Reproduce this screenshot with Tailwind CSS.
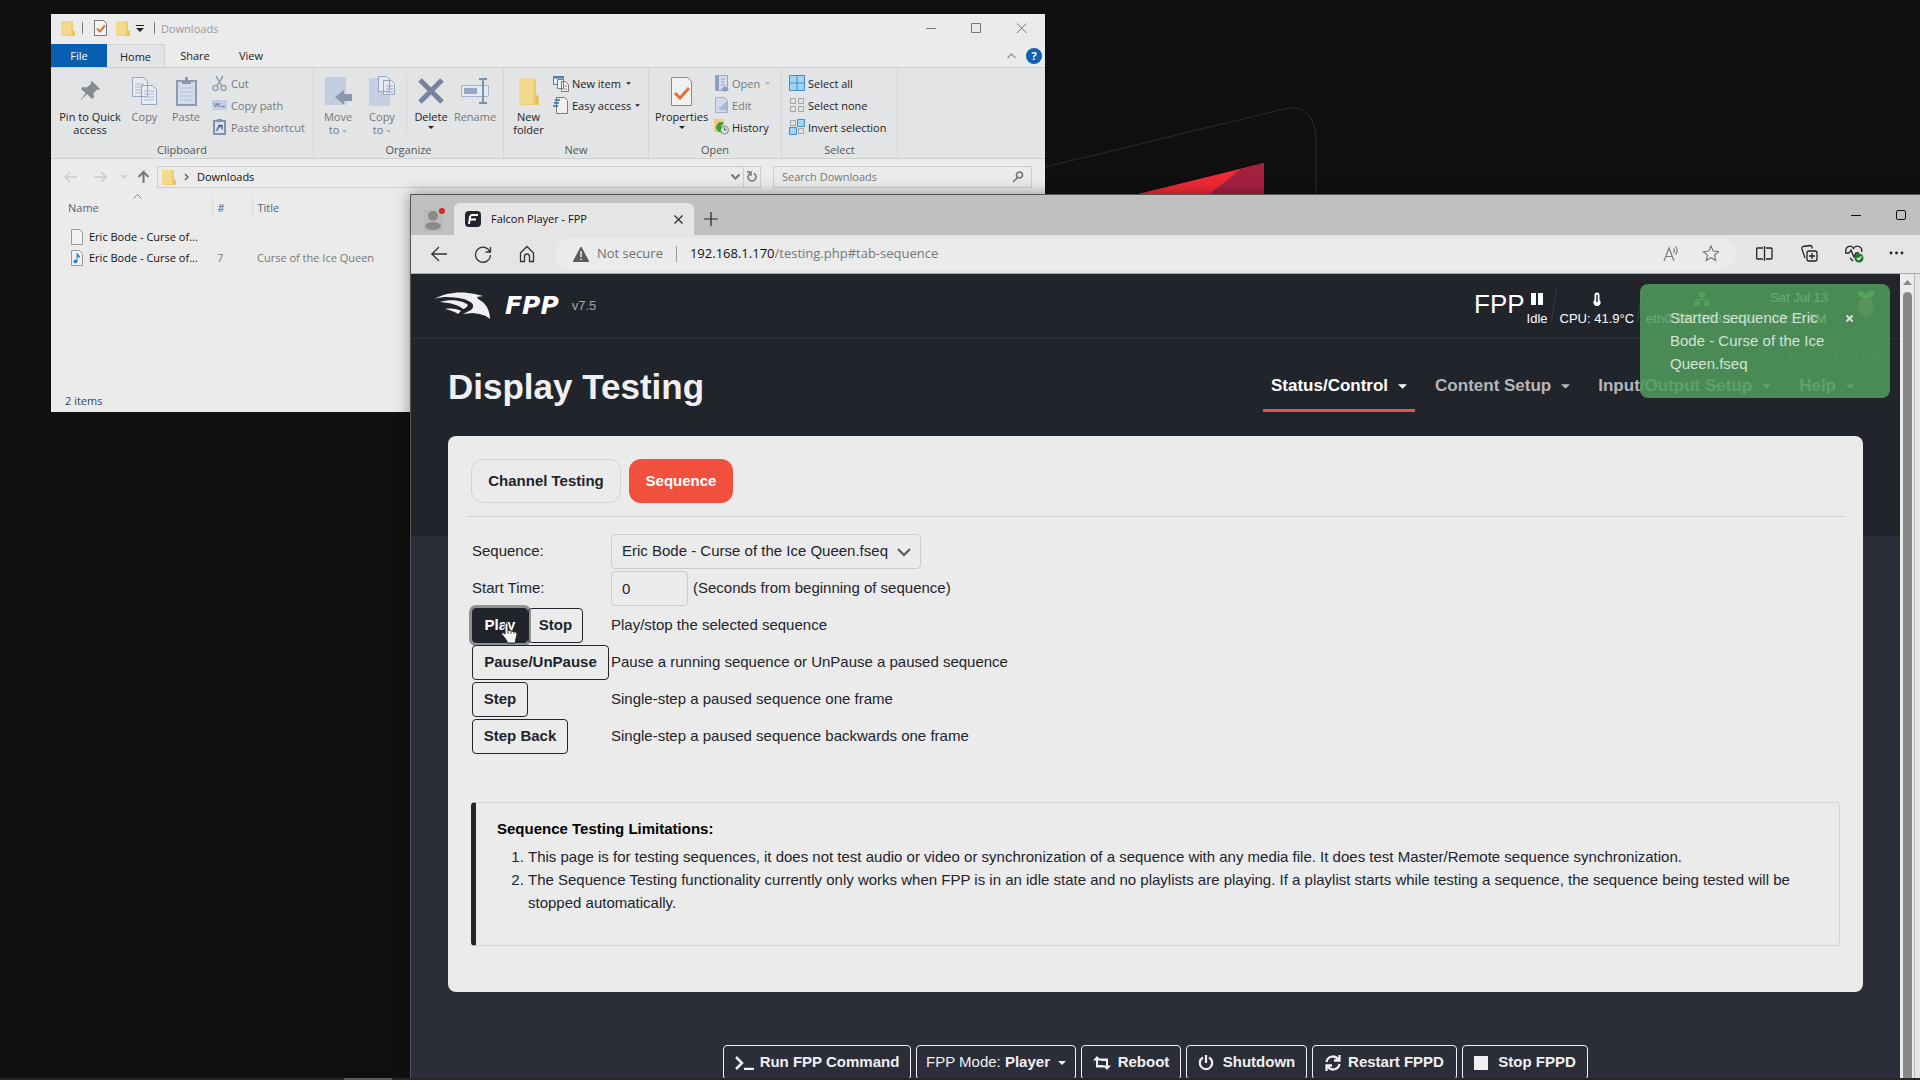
<!DOCTYPE html>
<html lang="en">
<head>
<meta charset="utf-8">
<title>Falcon Player - FPP</title>
<script src="https://cdn.jsdelivr.net/npm/@tailwindcss/browser@4"></script>
</head>
<body class="bg-[#101010]">
<svg class="hidden">
  <symbol id="folder" viewBox="0 0 14 16"><path d="M0 1h11l1 1v9l2 1v4H1L0 15z" fill="#eccb72"/><path d="M0 1h10v14l-9 .8L0 15z" fill="#f3d98c"/><path d="M11.500 10.500h2v5h-2z" fill="#e8bd58"/></symbol>
  <symbol id="caret" viewBox="0 0 8 4"><path d="M0 0h8L4 4z" fill="currentColor"/></symbol>
</svg>
<main class="relative min-h-screen overflow-hidden">

  <!-- Wallpaper -->
  <svg class="absolute left-[1040px] top-[100px]" width="290" height="100" viewBox="0 0 290 100" fill="none">
    <path d="M5 67 246 8.500Q274 4 276 38v60" stroke="#2c2c2c"/>
    <path d="M90 96 224 63v33z" fill="#ee2a35"/><path d="M201 69l23-6v33h-57z" fill="#a3203f"/>
  </svg>

  <!-- File manager -->
  <section class="absolute left-[51px] top-[14px] flex h-[398px] w-[994px] flex-col bg-[#ebebeb] font-['Open_Sans',sans-serif] text-[11px] leading-[13px] text-[#222]">
    <header class="flex h-[30px] items-center pb-[2px] pl-[10px] pr-[18px] text-[#999]">
      <svg width="14" height="16"><use href="#folder"/></svg>
      <span class="ml-[7px] h-3 w-px bg-[#777]"></span>
      <svg class="ml-[11px]" width="13" height="16" viewBox="0 0 13 16" fill="none"><path d="M.5.5h9l3 3v12H.5z" fill="#f4f4f4" stroke="#777"/><path d="m3 8.500 3 3 5-6" stroke="#d9743a" stroke-width="2"/></svg>
      <svg class="ml-[9px]" width="14" height="16"><use href="#folder"/></svg>
      <svg class="ml-[6px]" width="8" height="8" viewBox="0 0 8 8" fill="#222"><path d="M0 1h8v1H0zM0 4h8L4 8z"/></svg>
      <span class="ml-[10px] h-3 w-px bg-[#777]"></span>
      <span class="ml-[6px]">Downloads</span>
      <svg class="ml-auto" width="101" height="11" viewBox="0 0 101 11" fill="none" stroke="#777"><path d="M0 5.500h10M45.500.5h9v9h-9zM91 .5l9.500 9.500M100.500.5 91 10"/></svg>
    </header>
    <nav class="flex h-[23px] items-stretch">
      <button class="w-14 bg-[#0a60b0] text-white">File</button>
      <button class="w-[58px] border-r border-t border-[#cfd1d3] bg-[#e2e4e6]">Home</button>
      <button class="w-[60px]">Share</button>
      <button class="w-[52px]">View</button>
      <span class="ml-auto flex items-center gap-[10px] pr-[3px]">
        <svg width="9" height="6" viewBox="0 0 9 6" fill="none" stroke="#999" stroke-width="1.500"><path d="m.5 5 4-4 4 4"/></svg>
        <span class="flex size-4 items-center justify-center rounded-full bg-[#0f62ae] font-bold text-white">?</span>
      </span>
    </nav>
    <div class="flex h-[92px] border-b border-t border-[#cdcfd1] bg-[#e2e4e6]">
      <div class="flex w-[263px] flex-col border-r border-[#d3d5d7] pt-[4px]">
        <div class="flex h-[71px]">
          <button class="flex w-[78px] flex-col items-center"><span class="flex h-[38px] items-center"><svg width="22" height="22" viewBox="0 0 22 22" fill="#868b90"><path d="m13 1 8 8-2 1-1-.5-3.500 4 .5 4-2 1.500-5-5L1 21l5.500-8L2 9l1.500-2 4 .5L12 4l-.5-1.500z"/></svg></span><span>Pin to Quick<br>access</span></button>
          <button class="flex w-[31px] flex-col items-center text-[#777]"><span class="flex h-[38px] items-center"><svg width="25" height="28" viewBox="0 0 25 28" fill="#e7ebf2" stroke="#98a6bd"><path d="M.5.5h11l4 4v15H.5zM9.500 8.500h11l4 4v15h-15z"/><path d="M3 7h9M3 10h6M3 13h6M3 16h6M12 14h10M12 17h10M12 20h10M12 23h10" stroke="#a9b9d6"/></svg></span>Copy</button>
          <button class="flex w-[52px] flex-col items-center text-[#777]"><span class="flex h-[38px] items-center"><svg width="21" height="29" viewBox="0 0 21 29"><path d="M1 4h19v24H1z" fill="#d5ddec" stroke="#8c9ab3" stroke-width="2"/><path d="M6 3h3V0h3v3h3v4H6z" fill="#8b98ad"/><path d="M4 11h13M4 15h13M4 19h13M4 23h13" stroke="#b3c2dd"/></svg></span>Paste</button>
          <div class="flex flex-col text-[#777]">
            <button class="flex h-[22px] items-center gap-[4px]"><svg width="15" height="17" viewBox="0 0 15 17" fill="none" stroke="#98a2b0" stroke-width="1.500"><path d="M4 1l6 10M11 1 5 11"/><circle cx="3.500" cy="13" r="2.500"/><circle cx="11.500" cy="13" r="2.500"/></svg>Cut</button>
            <button class="flex h-[22px] items-center gap-[4px]"><svg width="15" height="10" viewBox="0 0 15 10"><path d="M0 0h15v10H0z" fill="#c0cde2"/><path d="m2 3 1.500 4L5 3l1.500 4L8 3M9 6.500h4" fill="none" stroke="#71819d"/></svg>Copy path</button>
            <button class="flex h-[22px] items-center gap-[4px]"><svg width="15" height="16" viewBox="0 0 15 16"><path d="M2 2h11v13H2z" fill="#dbe3f0" stroke="#8193b2" stroke-width="2"/><path d="M5 0h5v3H5z" fill="#8193b2"/><path d="M5 12c0-3 1-4 4-5M6 6.500h4v4" fill="none" stroke="#54698f" stroke-width="1.500"/></svg>Paste shortcut</button>
          </div>
        </div>
        <div class="text-center text-[#555]">Clipboard</div>
      </div>
      <div class="flex w-[190px] flex-col border-r border-[#d3d5d7] pt-[4px]">
        <div class="flex h-[71px]">
          <button class="flex w-[48px] flex-col items-center text-[#777]"><span class="flex h-[38px] items-center"><svg width="27" height="28" viewBox="0 0 27 28"><path d="M0 0h21v28H0z" fill="#c2cde0"/><path d="m10 20 9-7v4h8v7h-8v4z" fill="#8997ad"/></svg></span><span>Move<br>to <svg class="inline text-[#aaa]" width="5" height="3"><use href="#caret"/></svg></span></button>
          <button class="flex w-[40px] flex-col items-center text-[#777]"><span class="flex h-[38px] items-center"><svg width="27" height="30" viewBox="0 0 27 30"><path d="M0 2h21v28H0z" fill="#c5d0e2"/><path d="M9.500.5h8l3 3v12h-11zM14.500 4.500h8l3 3v11h-11z" fill="#e5eaf3" stroke="#97a6bf"/><path d="M17 10h7M17 13h7M17 16h7" stroke="#97a6bf"/></svg></span><span>Copy<br>to <svg class="inline text-[#aaa]" width="5" height="3"><use href="#caret"/></svg></span></button>
          <span class="ml-[4px] mt-1 h-14 w-px bg-[#d3d5d7]"></span>
          <button class="flex w-[48px] flex-col items-center"><span class="flex h-[38px] items-center"><svg width="26" height="26" viewBox="0 0 26 26" stroke="#75849c" stroke-width="5"><path d="m2 2 22 22M24 2 2 24"/></svg></span>Delete<svg class="mt-[3px]" width="6" height="3"><use href="#caret"/></svg></button>
          <button class="flex w-[40px] flex-col items-center text-[#777]"><span class="flex h-[38px] items-center"><svg width="28" height="26" viewBox="0 0 28 26" fill="none"><path d="M.5 7.500h27v11H.5z" fill="#e4eaf4" stroke="#a5b4cd"/><path d="M3 10h13v6H3z" fill="#94a6c4"/><path d="M18 1h8M22 1v24M18 25h8" stroke="#7f90ac" stroke-width="2"/></svg></span>Rename</button>
        </div>
        <div class="text-center text-[#555]">Organize</div>
      </div>
      <div class="flex w-[145px] flex-col border-r border-[#d3d5d7] pt-[4px]">
        <div class="flex h-[71px]">
          <button class="flex w-[49px] flex-col items-center"><span class="flex h-[38px] items-center"><svg width="20" height="28" viewBox="0 0 14 16" preserveAspectRatio="none"><use href="#folder"/></svg></span><span>New<br>folder</span></button>
          <div class="flex flex-col">
            <button class="flex h-[22px] items-center gap-[3px]"><svg width="16" height="17" viewBox="0 0 16 17"><path d="M.5 1.500h10v8H.5z" fill="#e3edf7" stroke="#4d7fae"/><path d="M.5 1.500h10v2H.5z" fill="#4d7fae"/><path d="M4.500 4.500h6v9h-6zM8.500 6.500h4l3 3v7h-7z" fill="#f0f0f0" stroke="#7b7b7b"/><path d="M10 11h4M10 14h4" stroke="#999"/></svg>New item<svg class="ml-[2px]" width="5" height="3"><use href="#caret"/></svg></button>
            <button class="flex h-[22px] items-center gap-[3px]"><svg width="16" height="17" viewBox="0 0 16 17"><path d="M3.500.5h8l3 3v13h-11z" fill="#f0f0f0" stroke="#7b7b7b"/><path d="M2 3h5M1 6h5M0 9h5" stroke="#2472b8" stroke-width="1.500"/></svg>Easy access<svg class="ml-[1px]" width="5" height="3"><use href="#caret"/></svg></button>
          </div>
        </div>
        <div class="text-center text-[#555]">New</div>
      </div>
      <div class="flex w-[133px] flex-col border-r border-[#d3d5d7] pt-[4px]">
        <div class="flex h-[71px]">
          <button class="flex w-[65px] flex-col items-center"><span class="flex h-[38px] items-center"><svg width="21" height="29" viewBox="0 0 21 29"><path d="M.5.5h16l4 4v24H.5z" fill="#f1f1f1" stroke="#8a8a8a"/><path d="m4 16 5 5 9-10" fill="none" stroke="#d9743a" stroke-width="3"/></svg></span>Properties<svg class="mt-[3px]" width="6" height="3"><use href="#caret"/></svg></button>
          <div class="flex flex-col">
            <button class="flex h-[22px] items-center gap-[3px] text-[#777]"><svg width="15" height="17" viewBox="0 0 15 17"><path d="M1.500.5h12v15h-12z" fill="#d5dcea" stroke="#98a4ba"/><path d="M2 1h3v14H2z" fill="#8e9fc0"/><path d="M7 4h4M7 7h4M7 10h4" stroke="#98a4ba"/><path d="m7 14 4-3 4 3-4 3z" fill="#8ea0c0"/></svg>Open<svg class="ml-[2px] text-[#aaa]" width="5" height="3"><use href="#caret"/></svg></button>
            <button class="flex h-[22px] items-center gap-[3px] text-[#777]"><svg width="15" height="16" viewBox="0 0 15 16"><path d="M1.500.5h9l3 3v12h-12z" fill="#d0daec" stroke="#a3b0c8"/><path d="M4 12 13 4v10z" fill="#a6b8da"/></svg>Edit</button>
            <button class="flex h-[22px] items-center gap-[3px]"><svg width="15" height="16" viewBox="0 0 15 16"><path d="M0 0h10v13H0z" fill="#eccf77"/><circle cx="10.500" cy="11" r="4" fill="#ddd" stroke="#888"/><path d="M10.500 8.500V11h2" fill="none" stroke="#555"/><path d="M2 8c1-5 5-6 8-4l-3 3 0 6c-2 1-5-2-5-5z" fill="#3f9a43"/></svg>History</button>
          </div>
        </div>
        <div class="text-center text-[#555]">Open</div>
      </div>
      <div class="flex w-[116px] flex-col border-r border-[#d3d5d7] pt-[4px]">
        <div class="flex h-[71px] flex-col pl-[7px]">
          <button class="flex h-[22px] items-center gap-[3px]"><svg width="16" height="16" viewBox="0 0 16 16" fill="#a5d3f5" stroke="#3d8ecb"><path d="M.5.5h15v15H.5zM8 0v16M0 8h16"/></svg>Select all</button>
          <button class="flex h-[22px] items-center gap-[3px]"><svg width="16" height="16" viewBox="0 0 16 16" fill="none" stroke="#a2a2a2"><path d="M1.500 1.500h5v5h-5zM9.500 1.500h5v5h-5zM1.500 9.500h5v5h-5zM9.500 9.500h5v5h-5z"/></svg>Select none</button>
          <button class="flex h-[22px] items-center gap-[3px]"><svg width="16" height="16" viewBox="0 0 16 16" fill="none" stroke="#a2a2a2"><path d="M1.500 1.500h5v5h-5zM9.500 9.500h5v5h-5z"/><path d="M8.500.5h7v7h-7zM.5 8.500h7v7h-7z" fill="#a5d3f5" stroke="#3d8ecb"/></svg>Invert selection</button>
        </div>
        <div class="text-center text-[#555]">Select</div>
      </div>
    </div>
    <div class="flex h-[35px] items-center pl-[13px] pr-[13px]">
      <svg width="86" height="14" viewBox="0 0 86 14" fill="none" stroke="#cbcbcb" stroke-width="1.500"><path d="M13 7H1l5-5M1 7l5 5M30 7h12l-5-5M42 7l-5 5M57 5l3 3 3-3"/><path d="M79.500 13V2l-5 5M79.500 2l5 5" stroke="#777" stroke-width="2"/></svg>
      <div class="ml-[7px] flex h-[22px] w-[604px] items-center border border-[#ccc] pl-[4px]">
        <svg width="14" height="16"><use href="#folder"/></svg>
        <svg class="ml-[8px]" width="5" height="8" viewBox="0 0 5 8" fill="none" stroke="#666" stroke-width="1.500"><path d="m1 1 3 3-3 3"/></svg>
        <span class="ml-[8px] text-[#111]">Downloads</span>
        <svg class="ml-auto mr-[3px]" width="9" height="6" viewBox="0 0 9 6" fill="none" stroke="#777" stroke-width="2"><path d="m.5.5 4 4 4-4"/></svg>
        <span class="flex h-full w-[17px] items-center justify-center border-l border-[#ccc]"><svg width="10" height="12" viewBox="0 0 10 12" fill="none" stroke="#777" stroke-width="1.500"><path d="M7 2.500A4 4 0 1 1 3 2.500M0 1h4v4"/></svg></span>
      </div>
      <label class="ml-[12px] flex h-[22px] flex-1 items-center border border-[#ccc] pl-[8px] pr-[7px]">
        <input type="search" aria-label="Search Downloads" placeholder="Search Downloads" class="min-w-0 flex-1 bg-transparent outline-none placeholder:text-[#777]">
        <svg width="12" height="12" viewBox="0 0 12 12" fill="none" stroke="#777" stroke-width="1.700"><circle cx="7.500" cy="4" r="3"/><path d="M5.500 6.500 1 11"/></svg>
      </label>
    </div>
    <table class="w-[360px] table-fixed text-left">
      <thead>
        <tr class="h-[24px] font-normal text-[#55617a]">
          <th class="relative w-[161px] border-r border-[#dcdcdc] pl-[17px] pt-[2px] font-normal">Name<svg class="absolute left-[82px] top-0" width="9" height="5" viewBox="0 0 9 5" fill="none" stroke="#888"><path d="m.5 4.500 4-4 4 4"/></svg></th>
          <th class="w-[40px] border-r border-[#dcdcdc] pl-[5px] pt-[2px] font-normal">#</th>
          <th class="pl-[5px] pt-[2px] font-normal">Title</th>
        </tr>
      </thead>
      <tbody class="text-[#777]">
        <tr class="h-[8px]"><td colspan="3"></td></tr>
        <tr class="h-[21px]"><td class="whitespace-nowrap pl-[20px] text-[#111]"><span class="flex items-center gap-[6px]"><svg width="12" height="16" viewBox="0 0 12 16"><path d="M.5.5h8l3 3v12H.5z" fill="#f1f1f1" stroke="#999"/></svg>Eric Bode - Curse of...</span></td><td></td><td></td></tr>
        <tr class="h-[21px]"><td class="whitespace-nowrap pl-[20px] text-[#111]"><span class="flex items-center gap-[6px]"><svg width="12" height="16" viewBox="0 0 12 16"><path d="M.5.5h8l3 3v12H.5z" fill="#f1f1f1" stroke="#999"/><path d="M5.500 3h1c0 2 3 2 2.500 5-.5-1-1.500-1-2.500-1v4c0 3-4 2.500-4 .5s2-2 3-1.500z" fill="#2180ca"/></svg>Eric Bode - Curse of...</span></td><td class="pl-[5px]">7</td><td class="whitespace-nowrap pl-[5px]">Curse of the Ice Queen</td></tr>
      </tbody>
    </table>
    <footer class="mt-auto pb-[5px] pl-[14px] text-[#3c4560]">2 items</footer>
  </section>

  <!-- Web browser -->
  <section class="absolute bottom-[2px] left-[410px] right-0 top-[194px] flex flex-col overflow-hidden border-l border-t border-[#555] bg-[#e5e5e5] font-['Open_Sans',sans-serif] shadow-[0_0_14px_rgba(0,0,0,0.4)]">
    <div class="flex h-[40px] shrink-0 items-end bg-[#c0c0c0] pr-[13px]">
      <button aria-label="Profile" class="flex h-full w-[43px] items-end justify-center pb-[4px] pl-[4px]"><svg width="22" height="24" viewBox="0 0 22 24"><path d="M0 3h18v21H0z" fill="#bab9b5"/><circle cx="9" cy="9" r="5" fill="#8c8c8a"/><ellipse cx="9" cy="19" rx="8" ry="4" fill="#8c8c8a"/><circle cx="18" cy="4" r="3" fill="#d02a25"/></svg></button>
      <div class="flex h-[32px] w-[240px] items-center rounded-t-md bg-[#e5e5e5] pl-[11px] pr-[11px] text-[11px]">
        <span class="flex size-4 items-center justify-center rounded bg-[#22242c]"><svg width="10" height="10" viewBox="0 0 10 10" fill="none" stroke="#fff" stroke-width="2"><path d="M10 1H4Q2.500 1 2 3L1 10M2 5.500h6"/></svg></span>
        <span class="ml-[10px] text-[#111]">Falcon Player - FPP</span>
        <button aria-label="Close tab" class="ml-auto"><svg width="9" height="9" viewBox="0 0 9 9" stroke="#333" stroke-width="1.300"><path d="m.5.5 8 8M8.500.5l-8 8"/></svg></button>
      </div>
      <button aria-label="New tab" class="ml-[10px] pb-[9px]"><svg width="14" height="14" viewBox="0 0 14 14" stroke="#222" stroke-width="1.200"><path d="M7 0v14M0 7h14"/></svg></button>
      <svg class="mb-[14px] ml-auto" width="57" height="11" viewBox="0 0 57 11" fill="none" stroke="#111"><path d="M1 5.500h10"/><rect x="46.500" y=".5" width="9" height="9" rx="1.500"/></svg>
    </div>
    <div class="flex h-[39px] shrink-0 items-center border-b border-[#a9adb3] pl-[20px] pr-[16px]">
      <svg width="104" height="18" viewBox="0 0 104 18" fill="none" stroke="#333" stroke-width="1.300"><path d="M16 9H1l7-7M1 9l7 7M59 7a7.500 7.500 0 1 0 .5 3M59.500 2v5h-5M89.500 8l6.500-6.500L102.500 8v8.500h-4v-5a2.500 2.500 0 0 0-5 0v5h-4z"/></svg>
      <div class="ml-[20px] flex h-[32px] flex-1 items-center rounded-full bg-[#ebebeb] pl-[18px] pr-[17px] text-[13px]">
        <svg width="16" height="15" viewBox="0 0 16 15"><path d="M8 0l8 15H0z" fill="#5c5c5c" stroke="#5c5c5c" stroke-linejoin="round"/><path d="M8 4v6M8 11.500v1.500" stroke="#eee" stroke-width="1.500"/></svg>
        <span class="ml-[8px] text-[#707070]">Not secure</span>
        <span class="ml-[13px] h-4 w-px bg-[#999]"></span>
        <span class="ml-[13px] text-[#777]"><span class="text-[#111]">192.168.1.170</span>/testing.php#tab-sequence</span>
        <svg class="ml-auto" width="56" height="18" viewBox="0 0 56 18" fill="none" stroke="#7c7c7c" stroke-width="1.200"><path d="m1 16 5-13 5 13M3 11.500h6M10.500 3.500q2 2 0 4.500M12.500 1.500q3.500 4 0 8"/><path d="m48 1 2.200 5 5.300.6-4 3.600 1.200 5.300L48 12.800l-4.700 2.700 1.200-5.300-4-3.600 5.300-.6z"/></svg>
      </div>
      <svg class="ml-[20px]" width="148" height="20" viewBox="0 0 148 20" fill="none" stroke="#222" stroke-width="1.300"><path d="M7 4H1.500q-.8 0-.8.8v9.400q0 .8.800.8H7M8.500 2v15M10 4h5q1 0 1 1v9q0 1-1 1h-5"/><rect x="51" y="7" width="10" height="10" rx="2"/><path d="M56 9v6M53 12h6M49 14l-3-9q-.5-2 1-2.500l7-1q2 0 2.500 3"/><path d="m97 17-3-3M90 8c-1.500-5 5-8 7.500-3.500C100 0 107 2.500 105.500 8M89 9h4l2-3 3 7 2-4h3"/><circle cx="103" cy="14" r="4.500" fill="#1f7a2d" stroke="none"/><path d="m101 14 1.500 1.500 3-3" stroke="#fff"/><g fill="#222" stroke="none"><circle cx="135" cy="9" r="1.400"/><circle cx="140.500" cy="9" r="1.400"/><circle cx="146" cy="9" r="1.400"/></g></svg>
    </div>

    <div class="flex min-h-0 flex-1">
      <div class="relative min-w-0 flex-1 overflow-hidden bg-[linear-gradient(#22242c_262px,#2b2d38_262px)] font-['Liberation_Sans',Arial,sans-serif] text-[15px] text-[#22242c]">
        <header class="flex h-[65px] items-center border-b border-[#30323b] pl-[23px] pr-[24px] text-white">
          <svg width="57" height="28" viewBox="0 0 57 28" fill="#f0f0f2"><path d="M0 7C12 0 28-1 41 2l8 2-6 1 1 2c6 3 12 9 12 20-4-4-10-5-17-6l-10 1 8-4c3-3 3-6-1-8C26 6 14 3 0 7z"/><path d="M16 6c9-1 18 1 22 6-1 3-2 5-5 6 2-3 2-5-1-7-4-3-9-4-16-5z" fill="#22242c"/><path d="M6 10c10-3 22-2 28 3-1 2-2 3-5 4-5-4-11-6-23-7z"/><path d="M11 17c7-1 13 0 16 2l-3 3c-3-2-7-4-13-5z"/></svg>
          <span class="ml-[14px] font-['DejaVu_Sans',sans-serif] text-[25px] font-bold italic">FPP</span>
          <span class="ml-[13px] text-[13px] text-[#a5a6aa]">v7.5</span>
          <div class="ml-auto flex h-[44px] items-start text-[13px] leading-[18px]">
            <span class="text-[26px] leading-[40px]">FPP</span>
            <div class="ml-[2px] flex h-full flex-col items-center justify-between"><svg class="mt-[9px]" width="12" height="12" viewBox="0 0 12 12" fill="#fff"><path d="M0 0h5v12H0zM7 0h5v12H7z"/></svg><span>Idle</span></div>
            <svg class="mx-[3px] mt-[5px]" width="6" height="32" viewBox="0 0 6 32" stroke="#3a3c45"><path d="M5.500 0 .5 32"/></svg>
            <div class="flex h-full flex-col items-center justify-between"><svg class="mt-[8px]" width="8" height="14" viewBox="0 0 8 14"><path d="M1.500 3a2.500 2.500 0 0 1 5 0v5a3.500 3.500 0 1 1-5 0z" fill="#fff"/><path d="M4 3v7" stroke="#22242c" stroke-width="1.500"/></svg><span>CPU: 41.9°C</span></div>
            <svg class="mx-[3px] mt-[5px]" width="6" height="32" viewBox="0 0 6 32" stroke="#3a3c45"><path d="M5.500 0 .5 32"/></svg>
            <div class="flex h-full flex-col items-center justify-between"><svg class="mt-[8px]" width="16" height="14" viewBox="0 0 16 14" fill="#3fc04e"><path d="M5 0h6v5H9v2h5v2h2v5h-6V9h2V8H4v1h2v5H0V9h2V7h5V5H5z"/></svg><span>eth0:192.168.1.170</span></div>
            <div class="ml-[12px] flex h-full flex-col items-center justify-between"><span class="mt-[5px]">Sat Jul 13</span><span>03:10 AM</span></div>
            <svg class="ml-[28px] mt-[7px]" width="20" height="26" viewBox="0 0 20 26"><path d="M1 0q7-1 9 4 2-5 9-4-1 6-6 7H7Q2 6 1 0z" fill="#5fd042"/><path d="M10 7q8 0 8 9-3 9-8 10-5-1-8-10 0-9 8-9z" fill="#8c5f58"/><circle cx="10" cy="15" r="3" fill="#327b40"/></svg>
          </div>
        </header>
        <p class="pr-[13px] pt-[8px] text-right text-[13px] leading-[20px] text-[#4c4e57]">Press F1 for help</p>
        <div class="flex h-[45px] items-start pl-[37px] pr-[37px]">
          <h1 class="whitespace-nowrap text-[35px] font-bold leading-[40px] text-[#f0f0f2]">Display Testing</h1>
          <nav class="ml-auto flex h-full gap-[12px] whitespace-nowrap text-[17px] font-bold text-[#b5b6ba]">
            <a href="#status" class="flex items-start gap-[10px] border-b-[3px] border-[#e0564f] px-[8px] pt-[9px] leading-[20px] text-white">Status/Control<svg class="mt-[8px]" width="9" height="5"><use href="#caret"/></svg></a>
            <a href="#content" class="flex items-start gap-[10px] px-[8px] pt-[9px] leading-[20px]">Content Setup<svg class="mt-[8px]" width="9" height="5"><use href="#caret"/></svg></a>
            <a href="#io" class="flex items-start gap-[10px] px-[8px] pt-[9px] leading-[20px]">Input/Output Setup<svg class="mt-[8px]" width="9" height="5"><use href="#caret"/></svg></a>
            <a href="#help" class="flex items-start gap-[10px] px-[8px] pt-[9px] leading-[20px]">Help<svg class="mt-[8px]" width="9" height="5"><use href="#caret"/></svg></a>
          </nav>
        </div>

        <div class="mx-[37px] mt-6 rounded-lg bg-[#ebebeb] px-[23px] pb-[46px] pt-[23px]">
          <div class="flex h-11 gap-[8px] font-bold">
            <button class="w-[150px] rounded-xl border border-[#d3d3d3]">Channel Testing</button>
            <button class="w-[104px] rounded-xl bg-[#f1503f] text-white">Sequence</button>
          </div>
          <hr class="-mx-[4px] mt-[13px] border-[#cdcdcd]">
          <div class="mt-[17px] grid auto-rows-[35px] grid-cols-[139px_1fr] items-center gap-y-[2px] pl-[1px]">
            <label for="seq">Sequence:</label>
            <div class="relative w-[310px]">
              <select id="seq" class="h-[35px] w-full appearance-none rounded border border-[#cbcbcb] bg-transparent pl-[10px] pr-[20px]"><option>Eric Bode - Curse of the Ice Queen.fseq</option></select>
              <svg class="pointer-events-none absolute right-[10px] top-[14px]" width="14" height="9" viewBox="0 0 14 9" fill="none" stroke="#555" stroke-width="2"><path d="m1 1 6 6 6-6"/></svg>
            </div>
            <label for="start">Start Time:</label>
            <div class="flex items-center gap-[5px]"><input id="start" type="text" value="0" class="h-[35px] w-[77px] rounded border border-[#cbcbcb] bg-transparent pl-[10px]">(Seconds from beginning of sequence)</div>
            <div class="flex h-[35px] font-bold">
              <button class="w-14 rounded border border-[#22242c] bg-[#22242c] text-white ring-3 ring-[#8e8f92]">Play</button>
              <button class="w-[55px] rounded border border-[#22242c]">Stop</button>
            </div>
            <span>Play/stop the selected sequence</span>
            <button class="h-[35px] w-[137px] rounded border border-[#22242c] font-bold">Pause/UnPause</button>
            <span>Pause a running sequence or UnPause a paused sequence</span>
            <button class="h-[35px] w-14 rounded border border-[#22242c] font-bold">Step</button>
            <span>Single-step a paused sequence one frame</span>
            <button class="h-[35px] w-24 rounded border border-[#22242c] font-bold">Step Back</button>
            <span>Single-step a paused sequence backwards one frame</span>
          </div>
          <div class="mt-[48px] rounded border border-l-[5px] border-[#d3d3d3] border-l-[#22242c] pb-[31px] pl-[21px] pr-5 pt-[14px] leading-[23px]">
            <h2 class="font-bold text-black">Sequence Testing Limitations:</h2>
            <ol class="mt-[5px] list-decimal pl-[31px]">
              <li>This page is for testing sequences, it does not test audio or video or synchronization of a sequence with any media file. It does test Master/Remote sequence synchronization.</li>
              <li>The Sequence Testing functionality currently only works when FPP is in an idle state and no playlists are playing. If a playlist starts while testing a sequence, the sequence being tested will be stopped automatically.</li>
            </ol>
          </div>
        </div>

        <footer class="mt-[53px] flex justify-center gap-[5px] whitespace-nowrap font-bold text-[#f0f0f2]">
          <button class="flex h-[35px] w-[188px] items-center justify-center gap-[6px] rounded border border-[#f0f0f2]"><svg width="19" height="14" viewBox="0 0 19 14" fill="none" stroke="currentColor" stroke-width="2.500"><path d="m1 1 6 6-6 6M9 13h10"/></svg>Run FPP Command</button>
          <button class="flex h-[35px] w-[160px] items-center justify-center gap-[8px] rounded border border-[#f0f0f2]"><span><span class="font-normal">FPP Mode:</span> Player</span><svg width="8" height="4"><use href="#caret"/></svg></button>
          <button class="flex h-[35px] w-[100px] items-center justify-center gap-[7px] rounded border border-[#f0f0f2]"><svg width="18" height="14" viewBox="0 0 18 14" fill="currentColor"><path d="M4 0l4 4.500H5V9h5l2 2.500H3v-7H0zM14 14l-4-4.500h3V5H8L6 2.500h9v7h3z"/></svg>Reboot</button>
          <button class="flex h-[35px] w-[121px] items-center justify-center gap-[9px] rounded border border-[#f0f0f2]"><svg width="16" height="16" viewBox="0 0 16 16" fill="none" stroke="currentColor" stroke-width="2.200"><path d="M5 2.500a6.200 6.200 0 1 0 6 0M8 0v8"/></svg>Shutdown</button>
          <button class="flex h-[35px] w-[145px] items-center justify-center gap-[7px] rounded border border-[#f0f0f2]"><svg width="16" height="16" viewBox="0 0 16 16" fill="none" stroke="currentColor" stroke-width="2.300"><path d="M1.500 7A6.500 6.500 0 0 1 13 4M14.500 9A6.500 6.500 0 0 1 3 12M14.500 0v5.500H9M1.500 16v-5.500H7"/></svg>Restart FPPD</button>
          <button class="flex h-[35px] w-[126px] items-center justify-center gap-[10px] rounded border border-[#f0f0f2]"><span class="h-[14px] w-[14px] bg-[#f0f0f2]"></span>Stop FPPD</button>
        </footer>

        <!-- Notification over the header -->
        <div role="status" class="absolute right-[10px] top-[10px] h-[114px] w-[250px] rounded-lg bg-[#519c5d]/85 pl-[30px] pt-[22px] leading-[23px] text-[#d3e3d5]">
          <p class="w-[160px]">Started sequence Eric Bode - Curse of the Ice Queen.fseq</p>
          <button aria-label="Dismiss" class="absolute right-[37px] top-[31px]"><svg width="7" height="7" viewBox="0 0 7 7" stroke="#d3e3d5" stroke-width="2"><path d="m.5.5 6 6M6.500.5l-6 6" /></svg></button>
        </div>
      </div>
      <div class="flex w-[14px] flex-col items-center bg-[#ebebeb] pt-[6px]">
        <svg width="9" height="5" viewBox="0 0 9 5" fill="#888"><path d="M0 5h9L4.500 0z"/></svg>
        <span class="mt-[7px] w-[9px] flex-1 rounded-t-full bg-[#888]"></span>
      </div>
      <div class="w-[6px] border-l border-[#bbb]"></div>
    </div>
  </section>

  <!-- Mouse pointer -->
  <svg class="absolute left-[500px] top-[622px]" width="18" height="22" viewBox="0 0 18 22"><path d="M5 1.500q2-1.500 3 .5v6l7.500 2q1.500.5 1.500 2.500l-1.500 6V21H7v-2l-5-6.500q-1-2 1-2l2 1.500z" fill="#f6f6f6" stroke="#22242c"/><path d="M8 8v4M11 9v3M14 10v2" stroke="#555"/></svg>

  <!-- Edge of the taskbar -->
  <div class="absolute inset-x-0 bottom-0 h-[2px] bg-[#2a2627] pl-[344px]"><div class="h-full w-12 bg-[#5a5a5a]"></div></div>
</main>
</body>
</html>
